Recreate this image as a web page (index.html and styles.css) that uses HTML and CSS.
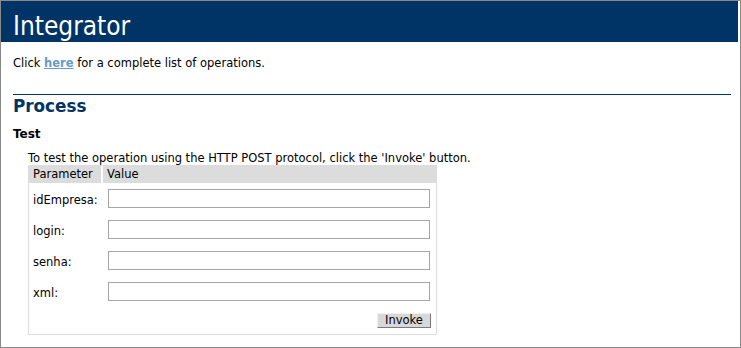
FILE: index.html
```html
<!DOCTYPE html>
<html>
<head>
<meta charset="utf-8">
<title>Integrator</title>
<link rel="stylesheet" href="styles.css">
</head>
<body>
<div class="frame">
  <div class="heading1">Integrator</div>
  <div class="content">
    <p class="intro">Click <a href="#">here</a> for a complete list of operations.</p>
    <h2>Process</h2>
    <h3>Test</h3>
    <p class="frmtext">To test the operation using the HTTP POST protocol, click the 'Invoke' button.</p>
    <form class="frm">
      <div class="frmheader">
        <div class="col-param">Parameter</div>
        <div class="col-value">Value</div>
      </div>
      <div class="frmrow">
        <div class="col-param label">idEmpresa:</div>
        <div class="col-value"><input class="frmInput" type="text"></div>
      </div>
      <div class="frmrow">
        <div class="col-param label">login:</div>
        <div class="col-value"><input class="frmInput" type="text"></div>
      </div>
      <div class="frmrow">
        <div class="col-param label">senha:</div>
        <div class="col-value"><input class="frmInput" type="text"></div>
      </div>
      <div class="frmrow">
        <div class="col-param label">xml:</div>
        <div class="col-value"><input class="frmInput" type="text"></div>
      </div>
      <div class="frmbuttons">
        <button type="button" class="button">Invoke</button>
      </div>
    </form>
  </div>
</div>
</body>
</html>
```
FILE: styles.css
```css
html, body {
  margin: 0;
  padding: 0;
  background: #ffffff;
}

body {
  font-family: "DejaVu Sans", Verdana, sans-serif;
  font-size: 11.5px;
  color: #000000;
}

.frame {
  width: 741px;
  height: 348px;
  box-sizing: border-box;
  border: 1px solid #8a8a8a;
  overflow: hidden;
  background: #ffffff;
}

.heading1 {
  background: #003366;
  color: #ffffff;
  font-family: "DejaVu Sans Condensed", "DejaVu Sans", sans-serif;
  font-stretch: condensed;
  font-size: 26px;
  font-weight: normal;
  line-height: 30px;
  height: 41px;
  box-sizing: border-box;
  padding: 10px 0 0 12px;
  margin-right: 2px;
}

.content {
  padding-left: 12px;
}

.intro {
  margin: 14px 0 0 0;
  line-height: 14px;
}

.intro a {
  color: #6699cc;
  font-weight: bold;
  text-decoration: underline;
}

h2 {
  margin: 24px 9px 0 0;
  padding-top: 1px;
  border-top: 1px solid #003366;
  color: #003366;
  font-size: 16.8px;
  font-weight: bold;
  line-height: 20px;
}

h3 {
  margin: 11px 0 0 0;
  font-size: 12px;
  font-weight: bold;
  line-height: 15px;
}

.frmtext {
  margin: 9px 0 0 15px;
  line-height: 14px;
}

.frm {
  margin: 0 0 0 15px;
  width: 409px;
  box-sizing: border-box;
  border: 1px solid #dcdcdc;
}

.frmheader {
  display: flex;
  gap: 2px;
  height: 17px;
  line-height: 17px;
}

.frmheader > div {
  background: #dcdcdc;
}

.col-param {
  width: 72px;
  padding-left: 4px;
  box-sizing: border-box;
  flex: none;
}

.col-value {
  flex: 1;
  padding-left: 4px;
  box-sizing: border-box;
}

.frmrow {
  display: flex;
  gap: 2px;
  height: 31px;
  align-items: center;
}

.frmrow .col-value {
  padding-left: 5px;
}

.label {
  padding-top: 3px;
  line-height: 14px;
}

.frmInput {
  display: block;
  width: 322px;
  height: 19px;
  box-sizing: border-box;
  margin: 0;
  padding: 1px 2px;
  border: 1px solid #a5a5a5;
  background: #ffffff;
  font-family: "DejaVu Sans", Verdana, sans-serif;
  font-size: 11.5px;
}

.frmbuttons {
  display: flex;
  justify-content: flex-end;
  padding: 6px 5px 6px 0;
}

.button {
  width: 54px;
  height: 15px;
  box-sizing: border-box;
  margin: 0;
  padding: 0;
  border: 1px solid;
  border-color: #f0f0f0 #7a7a7a #7a7a7a #f0f0f0;
  background: #d8d8d8;
  font-family: "DejaVu Sans", Verdana, sans-serif;
  font-size: 11.5px;
  line-height: 13px;
  color: #000000;
}
```
